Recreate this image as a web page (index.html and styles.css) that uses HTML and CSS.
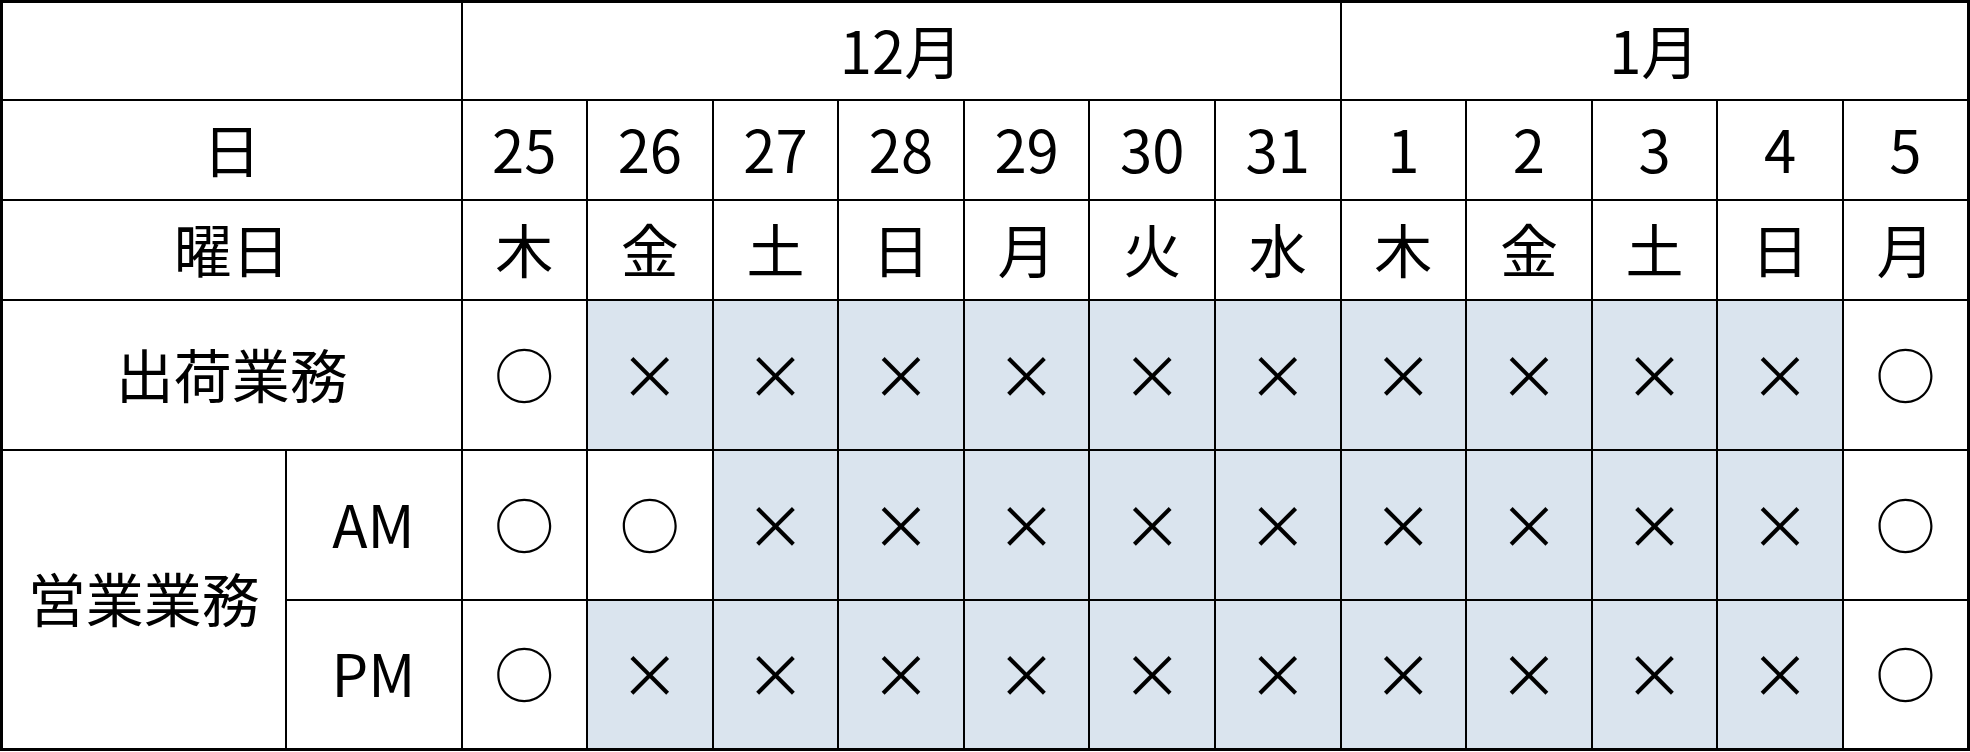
FILE: index.html
```html
<!DOCTYPE html>
<html lang="ja">
<head>
<meta charset="utf-8">
<link rel="stylesheet" href="styles.css">
</head>
<body>
<table class="sched">
  <colgroup>
    <col class="c-label">
    <col class="c-sub">
    <col span="12">
  </colgroup>
  <tr class="r-month">
    <td colspan="2"></td>
    <td colspan="7">12月</td>
    <td colspan="5">1月</td>
  </tr>
  <tr class="r-day">
    <td colspan="2">日</td>
    <td>25</td><td>26</td><td>27</td><td>28</td><td>29</td><td>30</td><td>31</td>
    <td>1</td><td>2</td><td>3</td><td>4</td><td>5</td>
  </tr>
  <tr class="r-dow">
    <td colspan="2">曜日</td>
    <td>木</td><td>金</td><td>土</td><td>日</td><td>月</td><td>火</td><td>水</td>
    <td>木</td><td>金</td><td>土</td><td>日</td><td>月</td>
  </tr>
  <tr class="r-task">
    <td colspan="2">出荷業務</td>
    <td class="ok">○</td>
    <td class="ng">×</td><td class="ng">×</td><td class="ng">×</td><td class="ng">×</td><td class="ng">×</td><td class="ng">×</td>
    <td class="ng">×</td><td class="ng">×</td><td class="ng">×</td><td class="ng">×</td>
    <td class="ok">○</td>
  </tr>
  <tr class="r-task">
    <td rowspan="2" class="sales">営業業務</td>
    <td>AM</td>
    <td class="ok">○</td><td class="ok">○</td>
    <td class="ng">×</td><td class="ng">×</td><td class="ng">×</td><td class="ng">×</td><td class="ng">×</td>
    <td class="ng">×</td><td class="ng">×</td><td class="ng">×</td><td class="ng">×</td>
    <td class="ok">○</td>
  </tr>
  <tr class="r-task">
    <td>PM</td>
    <td class="ok">○</td>
    <td class="ng">×</td><td class="ng">×</td><td class="ng">×</td><td class="ng">×</td><td class="ng">×</td><td class="ng">×</td>
    <td class="ng">×</td><td class="ng">×</td><td class="ng">×</td><td class="ng">×</td>
    <td class="ok">○</td>
  </tr>
</table>
</body>
</html>
```
FILE: styles.css
```css
html, body {
  margin: 0;
  padding: 0;
  background: #ffffff;
}

.sched {
  width: 1970px;
  height: 750px;
  table-layout: fixed;
  border-collapse: collapse;
  border: 3px solid #000;
  font-family: "Noto Sans CJK JP", "Noto Sans", sans-serif;
  font-size: 58px;
  font-weight: 400;
  line-height: 1;
  color: #000;
}

.c-label { width: 284px; }
.c-sub { width: 176px; }

.sched td {
  border: 2px solid #000;
  padding: 0 0 4px 0;
  text-align: center;
  vertical-align: middle;
}

.r-month { height: 98px; }
.r-day { height: 100px; }
.r-dow { height: 100px; }
.r-task { height: 150px; }

.ng {
  background: #dae4ee;
  font-size: 60px;
}

.ok {
  font-size: 60px;
}
```
